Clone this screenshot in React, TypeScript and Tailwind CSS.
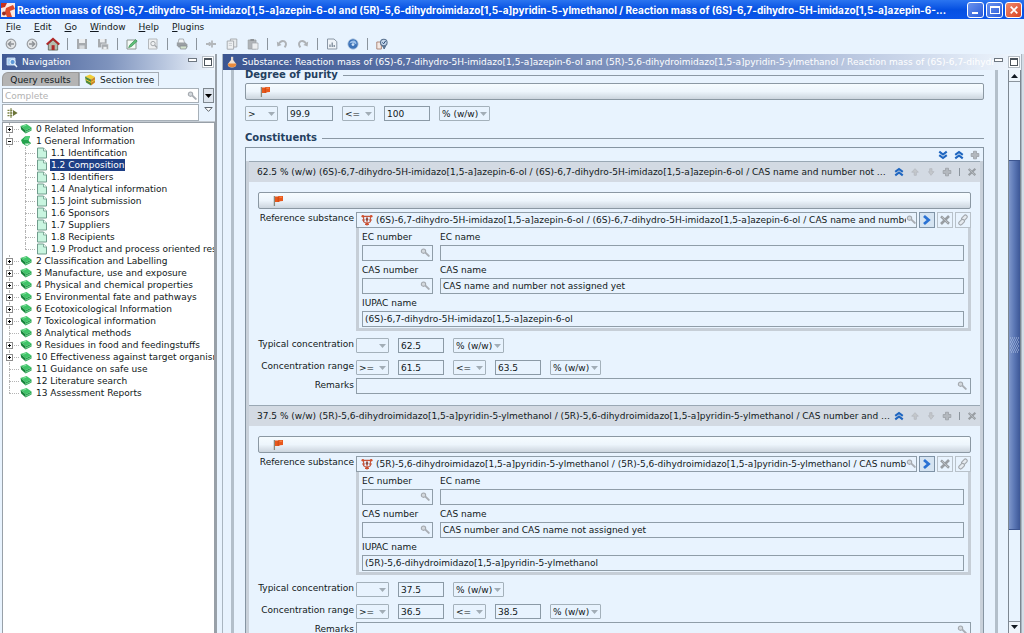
import React, { useState } from 'react';

const TITLE = 'Reaction mass of (6S)-6,7-dihydro-5H-imidazo[1,5-a]azepin-6-ol and (5R)-5,6-dihydroimidazo[1,5-a]pyridin-5-ylmethanol / Reaction mass of (6S)-6,7-dihydro-5H-imidazo[1,5-a]azepin-6-...';
const SUBSTANCE = 'Substance: Reaction mass of (6S)-6,7-dihydro-5H-imidazo[1,5-a]azepin-6-ol and (5R)-5,6-dihydroimidazo[1,5-a]pyridin-5-ylmethanol / Reaction mass of (6S)-6,7-dihydro';

const menus = ['File', 'Edit', 'Go', 'Window', 'Help', 'Plugins'];

const topSections = [
    { label: '0 Related Information', expandable: true },
    { label: '1 General Information', expandable: true, open: true },
    { label: '2 Classification and Labelling', expandable: true },
    { label: '3 Manufacture, use and exposure', expandable: true },
    { label: '4 Physical and chemical properties', expandable: true },
    { label: '5 Environmental fate and pathways', expandable: true },
    { label: '6 Ecotoxicological Information', expandable: true },
    { label: '7 Toxicological information', expandable: true },
    { label: '8 Analytical methods' },
    { label: '9 Residues in food and feedingstuffs', expandable: true },
    { label: '10 Effectiveness against target organisms', expandable: true },
    { label: '11 Guidance on safe use' },
    { label: '12 Literature search' },
    { label: '13 Assessment Reports' },
];

const generalPages = [
    '1.1 Identification',
    '1.2 Composition',
    '1.3 Identifiers',
    '1.4 Analytical information',
    '1.5 Joint submission',
    '1.6 Sponsors',
    '1.7 Suppliers',
    '1.8 Recipients',
    '1.9 Product and process oriented research',
];

const constituents = [
    {
        id: 'c1',
        header: '62.5 % (w/w) (6S)-6,7-dihydro-5H-imidazo[1,5-a]azepin-6-ol / (6S)-6,7-dihydro-5H-imidazo[1,5-a]azepin-6-ol / CAS name and number not assigned yet',
        reference: '(6S)-6,7-dihydro-5H-imidazo[1,5-a]azepin-6-ol / (6S)-6,7-dihydro-5H-imidazo[1,5-a]azepin-6-ol / CAS name and number',
        casName: 'CAS name and number not assigned yet',
        iupac: '(6S)-6,7-dihydro-5H-imidazo[1,5-a]azepin-6-ol',
        typical: '62.5',
        low: '61.5',
        high: '63.5',
    },
    {
        id: 'c2',
        header: '37.5 % (w/w) (5R)-5,6-dihydroimidazo[1,5-a]pyridin-5-ylmethanol / (5R)-5,6-dihydroimidazo[1,5-a]pyridin-5-ylmethanol / CAS number and CAS name not assigned yet',
        reference: '(5R)-5,6-dihydroimidazo[1,5-a]pyridin-5-ylmethanol / (5R)-5,6-dihydroimidazo[1,5-a]pyridin-5-ylmethanol / CAS number',
        casName: 'CAS number and CAS name not assigned yet',
        iupac: '(5R)-5,6-dihydroimidazo[1,5-a]pyridin-5-ylmethanol',
        typical: '37.5',
        low: '36.5',
        high: '38.5',
    },
];

/* ---------- icons ---------- */

type IconProps = { className?: string };

const Icon: React.FC<{ size?: number; className?: string; children: React.ReactNode }> = ({ size = 12, className = '', children }) => (
    <svg width={size} height={size} viewBox="0 0 12 12" fill="none" className={`shrink-0 ${className}`} aria-hidden="true">
        {children}
    </svg>
);

const SearchIcon: React.FC<IconProps> = ({ className }) => (
    <Icon size={10} className={className}>
        <path d="M6.5 5.5 L10.5 9.5" stroke="#a9aeb4" strokeWidth="2.4" strokeLinecap="round" />
        <circle cx="4.2" cy="3.8" r="2.6" fill="#d3d8dd" stroke="#a3a8ae" strokeWidth="1.3" />
    </Icon>
);

const FlagIcon = () => (
    <Icon>
        <path d="M2.4 1 V11" stroke="#8a8a7c" strokeWidth="1.3" />
        <path d="M3 1.6 L6 1.6 L6.6 1 H11 V6 L8 6.2 L7 7 H3 Z" fill="#e8581c" />
        <path d="M6.2 1.8 V6.8" stroke="#b8400c" strokeWidth="0.6" />
        <path d="M7.5 2.2 H10" stroke="#ff9a5a" strokeWidth="0.8" />
    </Icon>
);

const BookIcon = () => (
    <Icon>
        <path d="M0.5 3 L6.5 1 L11.5 4.6 L5.6 7.2 Z" fill="#3fc468" />
        <path d="M0.5 3 L5.6 7.2 V10.4 L1.2 6.6 Z" fill="#16843a" />
        <path d="M5.6 7.2 L11.5 4.6 V7.4 L5.6 10.4 Z" fill="#25a34d" />
        <path d="M6 9 L11.3 6.4" stroke="#b8ecc8" strokeWidth="0.6" />
        <path d="M3 3.2 L6.4 2.2" stroke="#9be8b0" strokeWidth="0.8" />
    </Icon>
);

const OpenBookIcon = () => (
    <Icon>
        <path d="M1 5 L5 1.4 L10 1 L8.6 5.4 L10.8 8.6 L6 10.6 L2.4 8.4 Z" fill="#25a34d" />
        <path d="M5 1.4 L10 1 L8.4 5 L3.4 5 Z" fill="#4fcf78" />
        <path d="M5.4 8.2 L10.8 8 L7.4 10.6 L4 9.4 Z" fill="#d8f4e0" stroke="#25a34d" strokeWidth="0.6" />
    </Icon>
);

const PageIcon = () => (
    <Icon>
        <path d="M1.5 1 H7.5 L10.5 4 V11 H1.5 Z" fill="#c9f5e0" stroke="#6f9c8c" strokeWidth="1" />
        <path d="M7.5 1 V4 H10.5" fill="#f4fffa" stroke="#6f9c8c" strokeWidth="0.8" />
    </Icon>
);

const MoleculeIcon = () => (
    <Icon>
        <path d="M1.2 2.4 H10.8 M2.6 2.4 V7.6 L6 9.6 L9.4 7.6 V2.4 M1 6 H4 M8 6 H11 M6 2.4 V10.6 M4 10.4 H8" stroke="#c4553c" strokeWidth="1.1" />
        <circle cx="1.8" cy="2.2" r="1.3" fill="#d2502c" />
        <circle cx="10.2" cy="2.2" r="1.3" fill="#d2502c" />
        <circle cx="6" cy="5.4" r="1.3" fill="#8b4a40" />
        <circle cx="6" cy="10.3" r="1.2" fill="#d2502c" />
    </Icon>
);

const FlaskIcon = () => (
    <Icon>
        <path d="M5 0.8 H7.2 V4.5 H5 Z" fill="#e6d9cf" />
        <path d="M5 4 L1.8 8 Q1.4 11.4 6 11.4 Q10.6 11.4 10.2 8 L7.2 4 Z" fill="#f0e2d4" />
        <path d="M2 7.6 H10.2 Q10.8 11.2 6 11.2 Q1.4 11.2 2 7.6 Z" fill="#ea8a3c" />
    </Icon>
);

const ChevronsUp = () => (
    <Icon size={10}>
        <path d="M1.5 5.8 L6 2.4 L10.5 5.8 M1.5 10 L6 6.6 L10.5 10" stroke="#1f66c0" strokeWidth="2.6" />
    </Icon>
);

const ChevronsDown = () => (
    <Icon size={10}>
        <path d="M1.5 2 L6 5.4 L10.5 2 M1.5 6.2 L6 9.6 L10.5 6.2" stroke="#1f66c0" strokeWidth="2.6" />
    </Icon>
);

const PlusIcon = () => (
    <Icon size={10}>
        <path d="M4.2 1.5 H7.8 V4.2 H10.6 V7.8 H7.8 V10.6 H4.2 V7.8 H1.4 V4.2 H4.2 Z" fill="#b3b8be" stroke="#9ca1a7" strokeWidth="1" />
    </Icon>
);

const ArrowUpIcon = () => (
    <Icon size={10}>
        <path d="M6 2 L10 6.2 H7.6 V10 H5 V6.2 H2 Z" fill="#c3c7cb" stroke="#b4b8be" strokeWidth="0.9" />
    </Icon>
);

const ArrowDownIcon = () => (
    <Icon size={10}>
        <path d="M4.4 2 H7.2 V5.6 H9.6 L6 10 L3 5.6 H4.4 Z" fill="#c3c7cb" stroke="#b4b8be" strokeWidth="0.9" />
    </Icon>
);

const CrossIcon: React.FC<{ size?: number }> = ({ size = 10 }) => (
    <Icon size={size}>
        <path d="M2 2.4 L10 9.8 M10 2 L2 10" stroke="#989da2" strokeWidth="2.6" />
        <path d="M3 3 L9 9" stroke="#c3c7cb" strokeWidth="0.8" />
    </Icon>
);

const ChevronRight = () => (
    <Icon size={12}>
        <path d="M3 2 L7.6 6 L3 10" stroke="#2a72d4" strokeWidth="2.8" />
    </Icon>
);

const LinkIcon = () => (
    <Icon size={12}>
        <rect x="5.6" y="0.6" width="3.6" height="6.4" rx="1.8" transform="rotate(45 7.4 3.8)" fill="#e6ebf0" stroke="#a3a8ad" strokeWidth="1.1" />
        <rect x="2.8" y="5" width="3.6" height="6.4" rx="1.8" transform="rotate(45 4.6 8.2)" fill="#e6ebf0" stroke="#a3a8ad" strokeWidth="1.1" />
    </Icon>
);

const Caret: React.FC<IconProps> = ({ className = '' }) => (
    <svg width="7" height="4" viewBox="0 0 7 4" className={`shrink-0 ${className}`} aria-hidden="true">
        <path d="M0 0 H7 L3.5 4 Z" fill="currentColor" />
    </svg>
);

/* ---------- toolbar ---------- */

const BackIcon = () => (
    <Icon><circle cx="6" cy="6" r="4.8" fill="#e4e6e8" stroke="#9a9ea2" strokeWidth="1.2" /><path d="M9 6 H4 M6 3.5 L3.4 6 L6 8.5" stroke="#8e9296" strokeWidth="1.5" /></Icon>
);
const ForwardIcon = () => (
    <Icon><circle cx="6" cy="6" r="4.8" fill="#e4e6e8" stroke="#9a9ea2" strokeWidth="1.2" /><path d="M3 6 H8 M6 3.5 L8.6 6 L6 8.5" stroke="#8e9296" strokeWidth="1.5" /></Icon>
);
const HomeIcon = () => (
    <Icon size={14}>
        <path d="M2 6 L6 2.6 L10 6 V11.2 H2 Z" fill="#b5bcae" stroke="#5a6256" strokeWidth="0.7" />
        <path d="M0.6 6.4 L6 1.6 L11.4 6.4" stroke="#b02828" strokeWidth="1.7" />
        <path d="M4.8 7 H7.4 V11.2 H4.8 Z" fill="#b02828" />
    </Icon>
);
const SaveIcon = () => (
    <Icon><path d="M1 1 H11 V11 H1 Z" fill="#a7abaf" /><path d="M3 1 H9 V5 H3 Z" fill="#eceef0" /><path d="M3.4 7.4 H8.6 V11 H3.4 Z" fill="#d6d9dc" /></Icon>
);
const SaveAllIcon = () => (
    <Icon><path d="M1 1 H9.6 V9.4 H1 Z" fill="#a7abaf" /><path d="M3 1 H7.8 V4.4 H3 Z" fill="#eceef0" /><path d="M4.6 6 H11.4 V11.4 H4.6 Z" fill="#a7abaf" stroke="#eceef0" strokeWidth="0.6" /><path d="M6.4 8.8 H9.6 V11.2 H6.4 Z" fill="#eceef0" /></Icon>
);
const EditIcon = () => (
    <Icon><path d="M1 2 H10 V11 H1 Z" fill="#f5fbf7" stroke="#8b9490" /><path d="M2.6 9.6 L4 6.8 L9.6 1.6 L11.2 3.2 L5.4 8.6 Z" fill="#5fbf78" stroke="#3a8f52" strokeWidth="0.7" /></Icon>
);
const PreviewIcon = () => (
    <Icon><path d="M1.5 1 H10 V11 H1.5 Z" fill="#eef0f2" stroke="#b4b8bc" /><circle cx="6" cy="5.6" r="2.2" stroke="#a4a8ac" /><path d="M7.6 7.2 L10 9.6" stroke="#a4a8ac" strokeWidth="1.4" /></Icon>
);
const PrintIcon = () => (
    <Icon><path d="M2 5 L3 1 H7.4 L8.6 5" fill="#f2f4f5" stroke="#9ba0a4" strokeWidth="0.8" /><path d="M0.8 4.4 H9.4 L11.4 6.6 V9.4 H2.6 L0.8 7.6 Z" fill="#9a9fa3" /><path d="M4 8 H11 L10 11 H4.4 Z" fill="#d3e2cc" stroke="#83888c" strokeWidth="0.7" /></Icon>
);
const CutIcon = () => (
    <Icon><path d="M1 6 H11 M7 2.4 V9.6 M4.6 4 V8" stroke="#b3b7bb" strokeWidth="1.8" /></Icon>
);
const CopyIcon = () => (
    <Icon><path d="M4.4 1 H10.8 V9 H4.4 Z" fill="#e7eaec" stroke="#a9adb1" /><path d="M1.2 3 H7.6 V11.2 H1.2 Z" fill="#eef0f2" stroke="#a9adb1" /><path d="M2.8 5.4 H6 M2.8 7.4 H6" stroke="#bfc3c6" strokeWidth="0.8" /></Icon>
);
const PasteIcon = () => (
    <Icon><path d="M1.2 2 H9 V11 H1.2 Z" fill="#b0b4b8" stroke="#9a9ea2" strokeWidth="0.8" /><path d="M3.4 1 H7 V3 H3.4 Z" fill="#8f9397" /><path d="M5 5 H11 V11.2 H5 Z" fill="#eceef0" stroke="#a6aaae" strokeWidth="0.8" /></Icon>
);
const UndoIcon = () => (
    <Icon><path d="M2.4 6.4 Q5 1.8 8.6 3.4 Q11.4 5.6 8.6 9.4" stroke="#aeb2b6" strokeWidth="1.9" /><path d="M0.8 3.4 L1.4 8.4 L5.6 7 Z" fill="#aeb2b6" /></Icon>
);
const RedoIcon = () => (
    <Icon><path d="M9.6 6.4 Q7 1.8 3.4 3.4 Q0.6 5.6 3.4 9.4" stroke="#aeb2b6" strokeWidth="1.9" /><path d="M11.2 3.4 L10.6 8.4 L6.4 7 Z" fill="#aeb2b6" /></Icon>
);
const ReportIcon = () => (
    <Icon><path d="M1.5 1 H8 L10.8 3.6 V11 H1.5 Z" fill="#eef3f8" stroke="#8a97a5" /><path d="M4 9 V6.6 M6.2 9 V4.4 M8.2 9 V7" stroke="#6f7f90" strokeWidth="1.2" /></Icon>
);
const HelpIcon = () => (
    <Icon><circle cx="6" cy="6" r="5.2" fill="#3d73b8" stroke="#b7cbe3" strokeWidth="0.8" /><path d="M2.2 5.4 Q4 1.6 8 2.8 Q10 4.4 9.4 6.4 Q6 3.6 2.2 5.4 Z" fill="#9cc0ea" /><circle cx="6" cy="6.6" r="1.4" fill="#cfe2f6" /></Icon>
);
const UserIcon = () => (
    <Icon><path d="M0.8 4 H5.4 V11 H0.8 Z" fill="#f4e9e4" stroke="#a8806f" strokeWidth="0.9" /><circle cx="7.8" cy="4.6" r="3.3" fill="#c5d6ea" stroke="#5a7290" strokeWidth="1.1" /><path d="M6.6 8 L8.2 11 L9.6 8" fill="#5a7290" stroke="#5a7290" /><path d="M6.4 4.4 L7.6 5.8 L9.6 3" stroke="#2b4c78" strokeWidth="1" /></Icon>
);

const ToolButton: React.FC<{ label: string; children: React.ReactNode }> = ({ label, children }) => (
    <button type="button" aria-label={label} className="flex h-4 w-[21px] items-center justify-center">
        {children}
    </button>
);

const Divider = () => <span className="mr-[3px] ml-1 h-3 w-px bg-[#8b949d]" />;

const Toolbar = () => (
    <div className="flex h-[17px] shrink-0 items-center">
        <ToolButton label="Back"><BackIcon /></ToolButton>
        <ToolButton label="Forward"><ForwardIcon /></ToolButton>
        <ToolButton label="Home"><HomeIcon /></ToolButton>
        <Divider />
        <ToolButton label="Save"><SaveIcon /></ToolButton>
        <ToolButton label="Save all"><SaveAllIcon /></ToolButton>
        <Divider />
        <ToolButton label="Edit"><EditIcon /></ToolButton>
        <ToolButton label="Preview"><PreviewIcon /></ToolButton>
        <Divider />
        <ToolButton label="Print"><PrintIcon /></ToolButton>
        <Divider />
        <ToolButton label="Cut"><CutIcon /></ToolButton>
        <ToolButton label="Copy"><CopyIcon /></ToolButton>
        <ToolButton label="Paste"><PasteIcon /></ToolButton>
        <Divider />
        <ToolButton label="Undo"><UndoIcon /></ToolButton>
        <ToolButton label="Redo"><RedoIcon /></ToolButton>
        <Divider />
        <ToolButton label="Report"><ReportIcon /></ToolButton>
        <ToolButton label="Help"><HelpIcon /></ToolButton>
        <Divider />
        <ToolButton label="User"><UserIcon /></ToolButton>
    </div>
);

/* ---------- window chrome ---------- */

const TitleBar = () => (
    <header className="flex h-[19px] shrink-0 items-center bg-linear-to-b from-[#2a74f0] via-[#0550e2] to-[#0a55ea] pr-[2px] pl-px">
        <svg width="14" height="14" viewBox="0 0 14 14" className="mr-[2px] shrink-0" aria-hidden="true">
            <path d="M0 0 H14 V14 H0 Z" fill="#fbe9e2" />
            <path d="M0 0 H6 L4 4 L0 5 Z" fill="#c8321e" />
            <path d="M5 5 L12 2 L14 6 L9 8 L11 14 H6 L4 9 Z" fill="#dc4a2c" />
            <circle cx="3" cy="10.6" r="2" fill="#9a2c22" />
        </svg>
        <h1 className="min-w-0 flex-1 truncate font-['Inter'] text-[10px] leading-4 font-bold text-white">{TITLE}</h1>
        <div className="ml-1 flex gap-[2px]">
            <button type="button" aria-label="Minimize" className="flex h-4 w-[17px] items-end rounded-[3px] border border-white bg-linear-to-br from-[#6a92ee] to-[#2a5ad8] px-1 pb-[3px]">
                <span className="h-[2px] w-[6px] bg-white" />
            </button>
            <button type="button" aria-label="Maximize" className="flex h-4 w-[17px] items-center justify-center rounded-[3px] border border-white bg-linear-to-br from-[#6a92ee] to-[#2a5ad8]">
                <span className="h-2 w-[10px] border border-t-2 border-white" />
            </button>
            <button type="button" aria-label="Close" className="flex h-4 w-[17px] items-center justify-center rounded-[3px] border border-white bg-linear-to-br from-[#f08a6c] to-[#d8401c]">
                <Icon size={10}><path d="M2 2 L10 10 M10 2 L2 10" stroke="#fff" strokeWidth="2" /></Icon>
            </button>
        </div>
    </header>
);

const PanelButtons = () => (
    <div className="flex items-center gap-[5px] pr-px">
        <button type="button" aria-label="Minimize panel" className="flex h-3 w-[9px] items-start pt-[2px]">
            <span className="h-1 w-full border border-[#6d7680] bg-white" />
        </button>
        <button type="button" aria-label="Maximize panel" className="flex h-3 w-3 items-center justify-center border border-[#b4bcc4] bg-white">
            <span className="h-2 w-2 border border-t-2 border-[#4c545c]" />
        </button>
    </div>
);

/* ---------- navigation ---------- */

const TreeRow: React.FC<{ label: string; expandable?: boolean; open?: boolean; last?: boolean }> = ({ label, expandable, open, last }) => (
    <div className="flex h-3 items-center">
        <span className="relative h-3 w-[15px] shrink-0">
            <span className={`absolute top-0 left-1 border-l border-dotted border-[#b4b4b4] ${last ? 'h-[6px]' : 'h-3'}`} />
            <span className="absolute top-[6px] left-1 w-[10px] border-t border-dotted border-[#b4b4b4]" />
            {expandable && (
                <span className="absolute top-[3px] left-px flex h-[7px] w-[7px] items-center justify-center border border-[#8c8c8c] bg-white">
                    <span className="h-px w-[3px] bg-black" />
                    {!open && <span className="absolute h-[3px] w-px bg-black" />}
                </span>
            )}
        </span>
        {open ? <OpenBookIcon /> : <BookIcon />}
        <button type="button" className="ml-1 leading-3 whitespace-nowrap">{label}</button>
    </div>
);

const SectionTree = () => {
    const [selected, setSelected] = useState('1.2 Composition');

    return (
        <ul className="min-h-0 flex-1 overflow-hidden border border-b-0 border-[#98a0a8] bg-white pl-[2px]">
            {topSections.map((section, i) => (
                <li key={section.label}>
                    <TreeRow {...section} last={i === topSections.length - 1} />
                    {section.open && (
                        <ul>
                            {generalPages.map((page, j) => (
                                <li key={page} className="relative flex h-3 items-center pl-[31px]">
                                    <span className={`absolute top-0 left-5 border-l border-dotted border-[#b4b4b4] ${j === generalPages.length - 1 ? 'h-[6px]' : 'h-3'}`} />
                                    <span className="absolute top-[6px] left-5 w-[10px] border-t border-dotted border-[#b4b4b4]" />
                                    <PageIcon />
                                    <button
                                        type="button"
                                        onClick={() => setSelected(page)}
                                        className={`ml-[2px] px-px leading-3 whitespace-nowrap ${page === selected ? 'bg-[#1d3f86] text-white' : ''}`}
                                    >
                                        {page}
                                    </button>
                                </li>
                            ))}
                        </ul>
                    )}
                </li>
            ))}
        </ul>
    );
};

const Navigation = () => (
    <aside className="flex w-[217px] shrink-0 flex-col border-r-2 border-[#98a0a8] pl-[2px]">
        <div className="flex h-4 shrink-0 items-center bg-linear-to-r from-[#3f5894] via-[#7e93bd] to-[#f2f8fe] pl-1">
            <Icon>
                <path d="M1 2 H9 V9 H1 Z" fill="#a8cdf2" stroke="#dfeefb" strokeWidth="0.8" />
                <circle cx="6.6" cy="6" r="2.6" fill="#5f98d8" stroke="#e8f3fd" />
                <path d="M8.4 8 L11 11" stroke="#e8f3fd" strokeWidth="1.4" />
            </Icon>
            <h2 className="ml-1 flex-1 leading-4 text-white">Navigation</h2>
            <PanelButtons />
        </div>
        <div className="mb-[2px] flex h-4 shrink-0 items-end" role="tablist">
            <button type="button" role="tab" aria-selected="false" className="h-[14px] w-[77px] rounded-tl-md border border-b-0 border-[#9a9a9a] bg-[#b4b4b4] leading-3 whitespace-nowrap">
                Query results
            </button>
            <button type="button" role="tab" aria-selected="true" className="flex h-[14px] w-20 items-center gap-1 border border-b-0 border-[#a4acb4] pl-1 leading-3 whitespace-nowrap">
                <Icon>
                    <path d="M1 2.6 L6 0.6 L11 3 L7 5.4 Z" fill="#f0cf3a" />
                    <path d="M1 2.6 L7 5.4 V11.4 L2 8.6 Z" fill="#4f8a3c" />
                    <path d="M7 5.4 L11 3 V8.6 L7 11.4 Z" fill="#c9862a" />
                    <path d="M1.4 5.4 L7 8.4 L11 6" stroke="#e8c83a" strokeWidth="1" />
                </Icon>
                Section tree
            </button>
        </div>
        <div className="flex h-[15px] shrink-0 items-stretch gap-1">
            <div className="flex min-w-0 flex-1 items-center border border-[#a7b0b8] bg-white pr-px">
                <input aria-label="Search section" placeholder="Complete" className="min-w-0 flex-1 px-[2px] leading-3 placeholder:text-[#b2b2b2]" />
                <SearchIcon />
            </div>
            <button type="button" aria-label="Search options" className="mr-px flex w-[11px] items-center justify-center border border-[#7f8890] bg-[#dde5ee] text-black">
                <Caret />
            </button>
        </div>
        <div className="mt-px flex h-[17px] shrink-0 gap-1">
            <div className="flex min-w-0 flex-1 items-center border border-[#a7b0b8] bg-white pl-1">
                <Icon>
                    <path d="M0.5 3.4 H6 M0.5 6 H6 M0.5 8.6 H6" stroke="#7b8346" strokeWidth="1.4" strokeDasharray="2 0.8" />
                    <path d="M4 1 V11" stroke="#7b8346" strokeWidth="1" />
                    <path d="M6 3 L10.6 6 L6 9 Z" fill="#6b7338" />
                </Icon>
            </div>
            <button type="button" aria-label="Filter menu" className="mr-px flex w-[11px] justify-center pt-[3px]">
                <svg width="9" height="5" viewBox="0 0 9 5" aria-hidden="true"><path d="M0.8 0.5 H8.2 L4.5 4.4 Z" fill="#fff" stroke="#5d656d" /></svg>
            </button>
        </div>
        <div className="h-px shrink-0 bg-[#c3cad1]" />
        <SectionTree />
    </aside>
);

/* ---------- form parts ---------- */

const FlagBar = () => (
    <button type="button" aria-label="Flags" className="flex h-[17px] w-full items-center rounded-[2px] border border-[#8b98a3] bg-linear-to-b from-[#f6fcff] via-[#edf5fc] to-[#ccd5de] pl-[13px]">
        <FlagIcon />
    </button>
);

const SmallInput: React.FC<{ label: string; value: string }> = ({ label, value }) => (
    <input aria-label={label} defaultValue={value} className="h-[15px] w-[46px] border border-[#8b9aa6] px-[2px] leading-3" />
);

const Select: React.FC<{ label: string; value: string; wide?: boolean }> = ({ label, value, wide }) => (
    <span className={`relative flex h-[15px] items-center ${wide ? 'w-[51px]' : 'w-[33px]'}`}>
        <select aria-label={label} defaultValue={value} className="h-full w-full appearance-none rounded-[1px] border border-[#a4b1bb] pl-[2px] leading-3">
            <option>{value}</option>
        </select>
        <Caret className="pointer-events-none absolute right-[3px] text-[#a2adb6]" />
    </span>
);

const TextBox: React.FC<{ id: string; label: string; value?: string; search?: boolean; className?: string }> = ({ id, label, value = '', search, className = '' }) => (
    <div className={`flex min-w-0 flex-col ${className}`}>
        <label htmlFor={id} className="flex h-[17px] items-center leading-3 whitespace-nowrap">{label}</label>
        <div className="flex h-4 items-center border border-[#8f9da8] pr-[2px]">
            <input id={id} defaultValue={value} className="min-w-0 flex-1 px-[2px] leading-3" />
            {search && <SearchIcon />}
        </div>
    </div>
);

const RowLabel: React.FC<{ htmlFor?: string; children: React.ReactNode }> = ({ htmlFor, children }) => (
    <label htmlFor={htmlFor} className="mr-[2px] w-24 shrink-0 pb-[3px] text-right leading-3 whitespace-nowrap">{children}</label>
);

const HeaderButton: React.FC<{ label: string; children: React.ReactNode }> = ({ label, children }) => (
    <button type="button" aria-label={label} className="flex h-3 w-4 items-center justify-center">{children}</button>
);

const Legend: React.FC<{ children: React.ReactNode }> = ({ children }) => (
    <div className="flex h-2 items-center gap-[5px]">
        <h3 className="text-[10px] leading-3 font-bold whitespace-nowrap text-[#24405f]">{children}</h3>
        <span className="h-px flex-1 bg-[#8b98a4]" />
    </div>
);

const Constituent: React.FC<{ data: (typeof constituents)[number] }> = ({ data }) => (
    <section className="border-t border-[#9aa8b4]">
        <div className="flex h-5 items-center bg-[#d3dae3] pl-2">
            <h4 className="min-w-0 flex-1 truncate leading-4">{data.header}</h4>
            <HeaderButton label="Collapse"><ChevronsUp /></HeaderButton>
            <HeaderButton label="Move up"><ArrowUpIcon /></HeaderButton>
            <HeaderButton label="Move down"><ArrowDownIcon /></HeaderButton>
            <HeaderButton label="Add"><PlusIcon /></HeaderButton>
            <span className="mx-1 h-2 w-px bg-[#8b949d]" />
            <HeaderButton label="Delete"><CrossIcon /></HeaderButton>
        </div>
        <div className="px-[9px] pt-[10px] pb-[11px]">
            <FlagBar />
            <div className="mt-[3px] flex items-start gap-[2px]">
                <RowLabel htmlFor={`${data.id}-ref`}>Reference substance</RowLabel>
                <div className="-ml-[2px] flex h-4 min-w-0 flex-1 items-center border border-[#8f9da8] pl-1">
                    <MoleculeIcon />
                    <input id={`${data.id}-ref`} defaultValue={data.reference} className="min-w-0 flex-1 pl-[3px] leading-3" />
                    <SearchIcon />
                </div>
                <button type="button" aria-label="Open" className="flex h-4 w-4 items-center justify-center border border-[#7f93a6] bg-[#d5e4f2]"><ChevronRight /></button>
                <button type="button" aria-label="Clear" className="flex h-4 w-4 items-center justify-center border border-[#b8c1c9]"><CrossIcon size={12} /></button>
                <button type="button" aria-label="Link" className="flex h-4 w-4 items-center justify-center border border-[#b8c1c9]"><LinkIcon /></button>
            </div>
            <div className="ml-[98px] border-x-3 border-b-3 border-[#c6ced7] pr-1 pb-px pl-[3px]">
                <div className="flex gap-[7px]">
                    <TextBox id={`${data.id}-ecno`} label="EC number" search className="w-[71px] shrink-0" />
                    <TextBox id={`${data.id}-ecname`} label="EC name" className="flex-1" />
                </div>
                <div className="flex gap-[7px]">
                    <TextBox id={`${data.id}-casno`} label="CAS number" search className="w-[71px] shrink-0" />
                    <TextBox id={`${data.id}-casname`} label="CAS name" value={data.casName} className="flex-1" />
                </div>
                <TextBox id={`${data.id}-iupac`} label="IUPAC name" value={data.iupac} />
            </div>
            <div className="mt-[7px] flex items-center">
                <RowLabel>Typical concentration</RowLabel>
                <div className="flex gap-[9px]">
                    <Select label="Typical qualifier" value="" />
                    <SmallInput label="Typical concentration" value={data.typical} />
                    <Select label="Typical unit" value="% (w/w)" wide />
                </div>
            </div>
            <div className="mt-[7px] flex items-center">
                <RowLabel>Concentration range</RowLabel>
                <div className="flex gap-[9px]">
                    <Select label="Lower qualifier" value=">=" />
                    <SmallInput label="Lower value" value={data.low} />
                    <Select label="Upper qualifier" value="<=" />
                    <SmallInput label="Upper value" value={data.high} />
                    <Select label="Range unit" value="% (w/w)" wide />
                </div>
            </div>
            <div className="mt-[3px] flex items-center">
                <RowLabel htmlFor={`${data.id}-remarks`}>Remarks</RowLabel>
                <div className="flex h-4 min-w-0 flex-1 items-center border border-[#8f9da8] pr-[3px]">
                    <input id={`${data.id}-remarks`} className="min-w-0 flex-1 px-[2px]" />
                    <SearchIcon />
                </div>
            </div>
        </div>
    </section>
);

const ScrollBar = () => (
    <div className="flex w-[13px] shrink-0 flex-col border-x border-[#7d8791]">
        <button type="button" aria-label="Scroll up" className="flex h-3 shrink-0 items-center justify-center border-b border-[#8b949d] bg-[#eef5fb]">
            <Caret className="rotate-180" />
        </button>
        <div className="flex-78" />
        <div className="flex flex-370 items-center justify-center border-y border-[#3c5590] bg-linear-to-r from-[#7f97cb] via-[#5a76b4] to-[#3d5796]">
            <svg width="9" height="16" viewBox="0 0 9 16" aria-hidden="true">
                <path d="M0 1 H9 M1 3 H9 M0 5 H9 M1 7 H9 M0 9 H9 M1 11 H9 M0 13 H9 M1 15 H9" stroke="#b4c4e4" strokeDasharray="1 1" />
            </svg>
        </div>
        <div className="flex-92" />
        <button type="button" aria-label="Scroll down" className="flex h-3 shrink-0 items-center justify-center border-t border-[#8b949d] bg-[#eef5fb]">
            <Caret />
        </button>
    </div>
);

const SubstancePanel = () => (
    <main className="ml-[5px] flex min-w-0 flex-1 flex-col border-l border-[#a9b5c0]">
        <div className="flex h-4 shrink-0 items-center bg-linear-to-r from-[#3b5591] via-[#8d9fc6] via-60% to-[#f0f7fe] pl-[3px]">
            <FlaskIcon />
            <h2 className="ml-1 min-w-0 flex-1 overflow-hidden leading-4 whitespace-nowrap text-white">{SUBSTANCE}</h2>
            <PanelButtons />
        </div>
        <div className="flex min-h-0 flex-1">
            <div className="ml-2 min-w-0 flex-1 overflow-hidden border-x-3 border-[#b3bfca] px-[11px] pt-px">
                <Legend>Degree of purity</Legend>
                <div className="mt-1">
                    <FlagBar />
                </div>
                <div className="mt-[6px] flex gap-[9px]">
                    <Select label="Lower qualifier" value=">" />
                    <SmallInput label="Lower purity" value="99.9" />
                    <Select label="Upper qualifier" value="<=" />
                    <SmallInput label="Upper purity" value="100" />
                    <Select label="Purity unit" value="% (w/w)" wide />
                </div>
                <div className="mt-[13px]">
                    <Legend>Constituents</Legend>
                </div>
                <div className="mt-[5px] border border-[#8695a2]">
                    <div className="flex h-[13px] items-center justify-end">
                        <HeaderButton label="Expand all"><ChevronsDown /></HeaderButton>
                        <HeaderButton label="Collapse all"><ChevronsUp /></HeaderButton>
                        <HeaderButton label="Add constituent"><PlusIcon /></HeaderButton>
                    </div>
                    <div className="border-x-3 border-[#c9d1da]">
                        {constituents.map((c) => (
                            <Constituent key={c.id} data={c} />
                        ))}
                    </div>
                </div>
            </div>
            <div className="w-[10px] shrink-0" />
            <ScrollBar />
        </div>
    </main>
);

const App: React.FC = () => (
    <div className="flex h-screen flex-col overflow-hidden bg-[#e8f3fe] font-['DejaVu_Sans',sans-serif] text-[9px] text-[#111820]">
        <TitleBar />
        <nav className="flex h-[15px] shrink-0 items-center gap-[13px] pl-[6px]">
            {menus.map((menu) => (
                <button key={menu} type="button" className="leading-4">
                    <span className="underline">{menu[0]}</span>{menu.slice(1)}
                </button>
            ))}
        </nav>
        <div className="pt-px pb-[2px]">
            <Toolbar />
        </div>
        <div className="flex min-h-0 flex-1">
            <Navigation />
            <SubstancePanel />
            <div className="w-[3px] shrink-0 border-l border-[#a9b5c0] bg-[#d5dde6]" />
        </div>
    </div>
);

export default App;
